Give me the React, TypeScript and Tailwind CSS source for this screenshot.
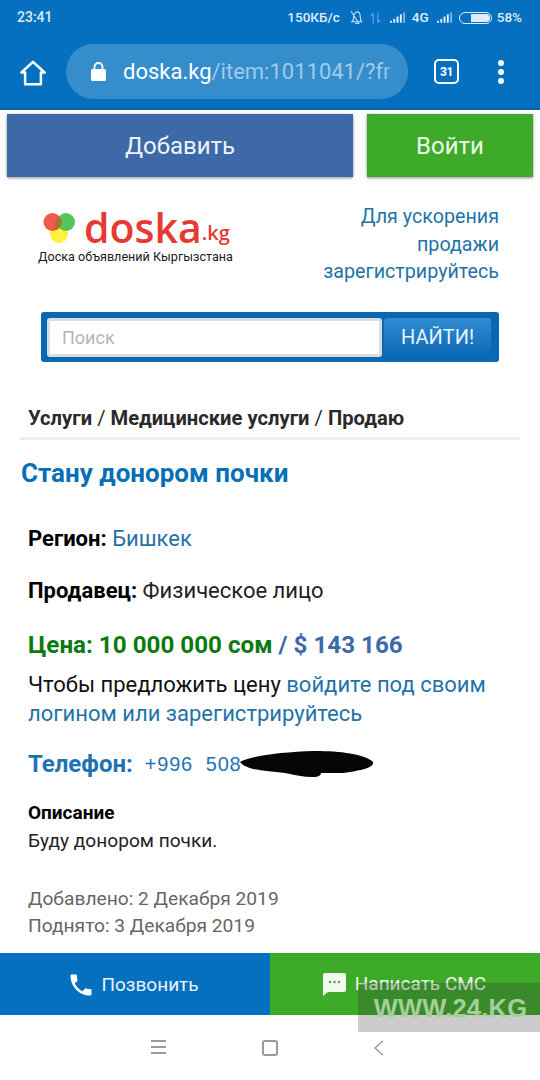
const font = "font-['Roboto',sans-serif]";

// signal bars used twice in the status bar
const SignalBars = () => (
  <svg width="16" height="12" viewBox="0 0 17 12">
    <rect x="0" y="9" width="2" height="2" fill="#e3f1fb" />
    <rect x="3.5" y="7" width="2" height="4" fill="#e3f1fb" />
    <rect x="7" y="4.5" width="2" height="6.5" fill="#e3f1fb" />
    <rect x="10.5" y="2" width="2" height="9" fill="#e3f1fb" />
    <rect x="14" y="0" width="2" height="11" fill="#7db6e0" />
  </svg>
);

const StatusBar = () => (
  <div className="flex h-[34px] items-center justify-between pl-[17px] pr-[18px] pt-[1px] text-[13.5px] font-medium text-[#dcedf9]">
    <span className="text-[14px]">23:41</span>
    <div className="flex items-center">
      <span>150КБ/с</span>
      <svg width="15" height="15" viewBox="0 0 16 16" fill="none" stroke="#cfe4f4" strokeWidth="1.1" className="ml-[9px]">
        <path d="M2 12.500h12M3.500 12.500c1-1.500 1.500-3 1.500-5C5 5 6.500 2 9 2s3 3 3 5.500c0 2 .5 3.500 1.500 5M6.500 14.500h3M2 1l9 14" />
      </svg>
      <svg width="11" height="14" viewBox="0 0 12 14" fill="none" stroke="#5fa7dc" strokeWidth="1.300" className="ml-[6px]">
        <path d="M3.500 13V2M3.500 2L1 4.500M8.500 1v11M8.500 12L11 9.500" />
      </svg>
      <span className="ml-[9px]"><SignalBars /></span>
      <span className="ml-[6px]">4G</span>
      <span className="ml-[8px]"><SignalBars /></span>
      <div className="ml-[6px] flex h-[12px] w-[33px] items-center rounded-full border border-[#dcedf9] pl-[11px]">
        <div className="h-[8px] w-[19px] rounded-r-full bg-[#dcedf9]" />
      </div>
      <span className="ml-[5px]">58%</span>
    </div>
  </div>
);

const BrowserBar = () => (
  <div className="flex h-[76px] items-start pl-[20px] pt-[10px]">
    <svg width="26" height="26" viewBox="0 0 28 28" fill="none" stroke="#fff" strokeWidth="2.700" strokeLinejoin="round" className="mt-[16px]">
      <path d="M1.500 13.500L14 2l12.500 11.500H22.500V26h-17V13.500z" />
    </svg>
    <div className="relative ml-[20px] flex h-[55px] w-[342px] items-center overflow-hidden rounded-full bg-[#358dcc] pl-[25px]">
      <svg width="15" height="19" viewBox="0 0 15 19" className="shrink-0">
        <path d="M3.500 7V5a4 4 0 018 0v2" fill="none" stroke="#fff" strokeWidth="1.800" />
        <rect x="0" y="7" width="15" height="12" rx="1.500" fill="#fff" />
      </svg>
      <div className="ml-[17px] whitespace-nowrap text-[22px] text-white">
        doska.kg<span className="text-[#9fcbea]">/item:1011041/?fr</span>
      </div>
      <div className="absolute right-0 top-0 h-full w-[24px] bg-gradient-to-r from-transparent to-[#358dcc] to-[60%]" />
    </div>
    <div className="ml-[26px] mt-[15px] flex h-[25px] w-[25px] items-center justify-center rounded-[5px] border-[2.500px] border-white text-[12px] font-bold tracking-[-0.5px] text-white">
      31
    </div>
    <div className="ml-[39px] mt-[16px] flex flex-col gap-[3px]">
      <div className="h-[6px] w-[6px] rounded-full bg-white" />
      <div className="h-[6px] w-[6px] rounded-full bg-white" />
      <div className="h-[6px] w-[6px] rounded-full bg-white" />
    </div>
  </div>
);

const Logo = () => (
  <div className="flex flex-col">
    <div className="ml-[5px] flex h-[32px] items-center">
      <svg width="32" height="32" viewBox="0 0 32 32">
        <circle cx="16" cy="23" r="9" fill="#fff23c" />
        <circle cx="23" cy="11" r="9" fill="#45c04a" fillOpacity="0.92" />
        <circle cx="9.500" cy="11" r="9" fill="#f24a3e" fillOpacity="0.92" />
        <path d="M16 5.700a9 9 0 010 10.800 9 9 0 01-2.500 2.500 9 9 0 012.500-13.300z" fill="#a8722f" />
      </svg>
      <span className="ml-[9px] text-[41px] font-semibold leading-[32px] text-[#e53b33] font-['Open_Sans',sans-serif]">doska</span>
      <span className="mt-[12px] text-[20px] font-semibold leading-[20px] text-[#e53b33] font-['Open_Sans',sans-serif]">.kg</span>
    </div>
    <div className="mt-[6px] text-[12.600px] leading-[16px] text-[#1a1a1a]">Доска объявлений Кыргызстана</div>
  </div>
);

const SearchBox = () => (
  <div className="ml-[41px] mt-[26px] flex h-[50px] w-[458px] items-center rounded-[3px] bg-[#0868b4] pl-[6px]">
    <div className="flex h-[39px] w-[335px] items-center rounded-[3px] border-[3px] border-[#dcdcdc] bg-white pl-[12px] text-[18px] text-[#b5b5b5]">
      Поиск
    </div>
    <div className="ml-[2px] flex h-[39px] w-[107px] items-center justify-center rounded-[3px] bg-gradient-to-b from-[#2f8cd2] to-[#0868b4] text-[20px] text-[#e8f3fb]">
      НАЙТИ!
    </div>
  </div>
);

export default function App() {
  return (
    <div className={`relative flex h-[1080px] w-[540px] flex-col overflow-hidden bg-white ${font}`}>
      <div className="h-[110px] shrink-0 border-b-[2px] border-[#0a63ab] bg-[#0570bf]">
        <StatusBar />
        <BrowserBar />
      </div>

      <div className="mt-[4px] flex h-[63px] shrink-0 gap-[14px] px-[7px]">
        <div className="flex w-[346px] items-center justify-center bg-[#3e69a8] text-[24px] text-[#eef3f9] shadow-[0_1px_3px_rgba(0,0,0,0.45)]">
          Добавить
        </div>
        <div className="flex w-[166px] items-center justify-center bg-[#3eaa2a] text-[24px] text-[#eff9ec] shadow-[0_1px_3px_rgba(0,0,0,0.45)]">
          Войти
        </div>
      </div>

      <div className="mt-[26px] flex h-[96px] shrink-0 items-start justify-between pl-[38px] pr-[41px]">
        <div className="pt-[8px]"><Logo /></div>
        <div className="text-right text-[19.700px] leading-[27.500px] text-[#1f73a8]">
          Для ускорения<br />продажи<br />зарегистрируйтесь
        </div>
      </div>

      <div className="-mt-[13px]"><SearchBox /></div>

      <div className="mx-[20px] mt-[41px] flex h-[37px] shrink-0 items-start border-b-[3px] border-[#efefef] pl-[8px] text-[20.200px] leading-[30px] text-[#2a2a2a]">
        <span className="font-bold">Услуги</span>
        <span>&nbsp;/&nbsp;</span>
        <span className="font-bold">Медицинские услуги</span>
        <span>&nbsp;/&nbsp;</span>
        <span className="font-bold">Продаю</span>
      </div>

      <h1 className="ml-[21px] mt-[17px] text-[26px] font-bold leading-[32px] text-[#0570b5]">Стану донором почки</h1>

      <div className="ml-[28px] mt-[34px] flex flex-col text-[22px] text-[#222]">
        <div className="h-[32px] leading-[32px]">
          <b className="font-bold text-black">Регион:</b> <span className="text-[#1f73a8]">Бишкек</span>
        </div>
        <div className="mt-[20px] h-[32px] leading-[32px]">
          <b className="font-bold text-black">Продавец:</b> Физическое лицо
        </div>
        <div className="mt-[21px] h-[34px] text-[24.200px] font-bold leading-[34px]">
          <span className="text-[#0b7a10]">Цена: 10 000 000 сом</span>
          <span className="text-[#3e69a8]"> / $ 143 166</span>
        </div>
        <div className="mt-[8px] text-[22px] leading-[29px] text-[#111]">
          Чтобы предложить цену <span className="text-[#1f73a8]">войдите под своим<br />логином или зарегистрируйтесь</span>
        </div>
        <div className="relative mt-[19px] flex h-[34px] items-center text-[#1f73b5]">
          <span className="text-[24px] font-bold">Телефон:</span>
          <span className="ml-[12px] text-[20px] font-medium tracking-[0.8px] font-['Liberation_Sans',sans-serif]">+996&nbsp;&nbsp;508</span>
          <svg width="134" height="28" viewBox="0 0 134 28" className="absolute left-[212px] top-[3px]">
            <path d="M0 12C10 6 40 2 75 1c25 0 50 3 58 11 1 5-8 8-30 11-8 0-18 0-22 0 0 2-2 4-8 4-10 0-18-2-28-4C25 21 6 20 0 12z" fill="#050505" />
          </svg>
        </div>
        <div className="mt-[20px] text-[19px] font-bold leading-[24px] text-black">Описание</div>
        <div className="mt-[3px] text-[19.100px] leading-[26px] text-[#222]">Буду донором почки.</div>
        <div className="mt-[32px] text-[19.200px] leading-[26.500px] text-[#666]">
          Добавлено: 2 Декабря 2019<br />Поднято: 3 Декабря 2019
        </div>
      </div>

      <div className="absolute bottom-[65px] left-0 flex h-[62px] w-[540px]">
        <div className="flex w-[270px] items-center justify-center bg-[#0570bf] pr-[4px] pt-[2px] text-[19px] text-[#eaf4fb]">
          <svg width="28" height="28" viewBox="0 0 24 24" fill="#fff" className="mr-[6px]">
            <path d="M6.620 10.790c1.440 2.830 3.760 5.140 6.590 6.590l2.200-2.200c.27-.27.67-.36 1.020-.24 1.120.37 2.330.57 3.570.57.55 0 1 .45 1 1V20c0 .55-.45 1-1 1-9.390 0-17-7.610-17-17 0-.55.45-1 1-1h3.500c.55 0 1 .45 1 1 0 1.250.2 2.450.57 3.570.11.35.03.74-.25 1.020l-2.200 2.200z" />
          </svg>
          Позвонить
        </div>
        <div className="flex w-[270px] items-center justify-center bg-[#3eaa2a] pr-[1px] text-[19px] text-[#eef8eb]">
          <svg width="23" height="23" viewBox="0 0 23 23" className="mr-[9px]">
            <path d="M2 0h19a2 2 0 012 2v15a2 2 0 01-2 2H5l-5 4V2a2 2 0 012-2z" fill="#f2f9ef" />
            <circle cx="7" cy="9" r="1.200" fill="#3eaa2a" />
            <circle cx="11.500" cy="9" r="1.200" fill="#3eaa2a" />
            <circle cx="16" cy="9" r="1.200" fill="#3eaa2a" />
          </svg>
          Написать СМС
        </div>
      </div>

      <div className="absolute bottom-[48px] right-0 flex h-[49px] w-[182px] items-start justify-center bg-[rgba(40,40,40,0.24)] pl-[3px] pt-[11px] text-[25.500px] font-bold leading-[28px] tracking-[0.2px] text-[#a4cf9a] font-['Liberation_Sans',sans-serif]">
        WWW.24.KG
      </div>

      <div className="absolute bottom-0 left-0 flex h-[65px] w-[540px] items-start pl-[151px] pt-[25px]">
        <div className="flex h-[14px] w-[15px] flex-col justify-between">
          <div className="h-[2px] bg-[#9a9a9a]" />
          <div className="h-[2px] bg-[#9a9a9a]" />
          <div className="h-[2px] bg-[#9a9a9a]" />
        </div>
        <div className="ml-[96px] h-[16px] w-[16px] rounded-[3px] border-[2px] border-[#9a9a9a]" />
        <svg width="12" height="16" viewBox="0 0 12 16" fill="none" stroke="#9a9a9a" strokeWidth="1.500" className="ml-[95px]">
          <path d="M10 1L2 8l8 7" />
        </svg>
      </div>
    </div>
  );
}
